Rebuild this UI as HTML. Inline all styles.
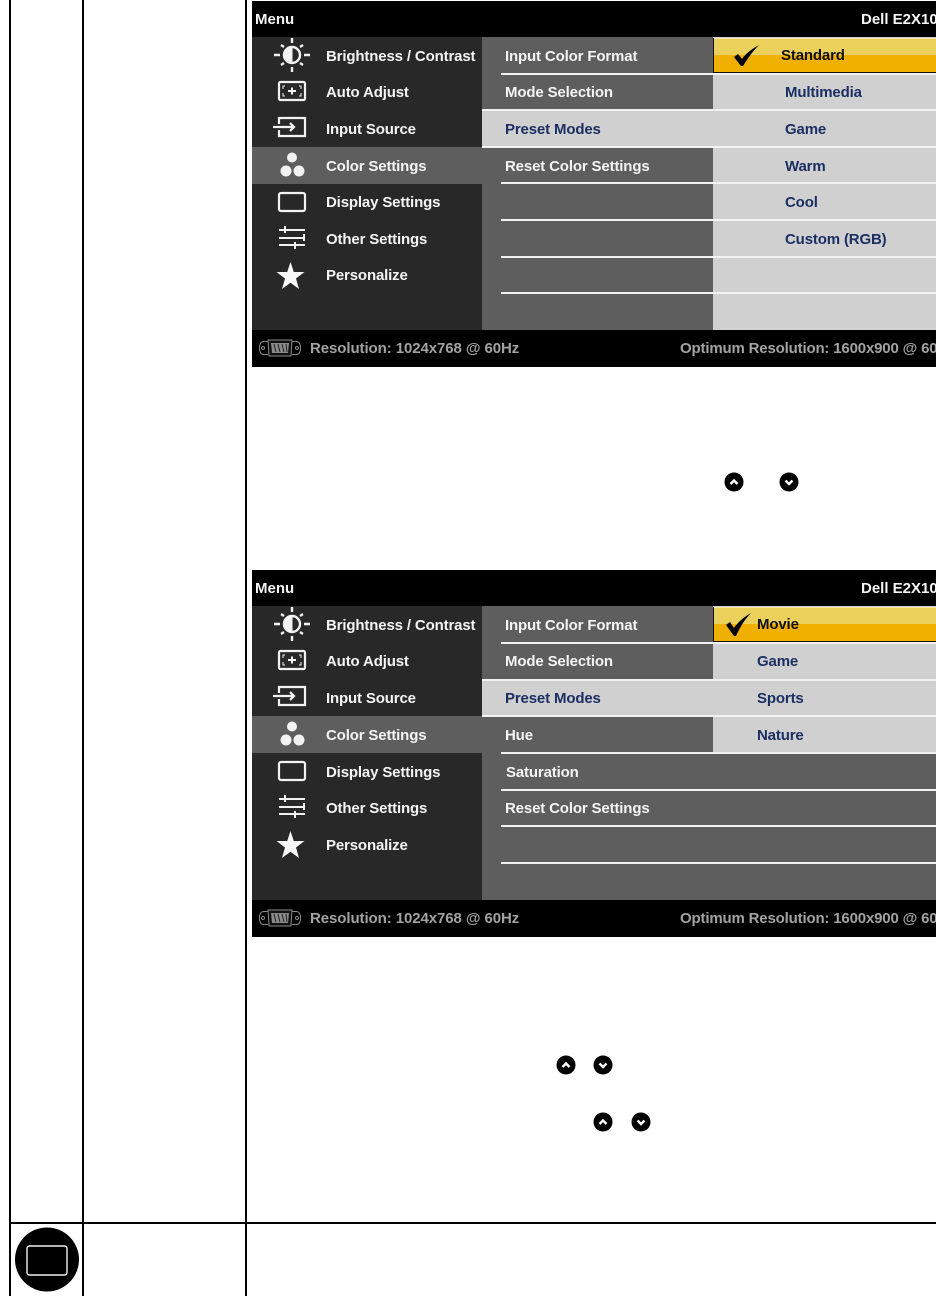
<!DOCTYPE html>
<html><head><meta charset="utf-8"><style>
html,body{margin:0;padding:0;background:#fff}
#p{position:relative;width:936px;height:1296px;overflow:hidden;background:#fff;font-family:"Liberation Sans",Arial,sans-serif}
#p div{position:absolute}
.k{background:#000}
.o{left:252px;width:684px;height:367px;background:#000;overflow:hidden}
.t{font-weight:bold;font-size:15px;line-height:18px;white-space:nowrap;color:#f4f4f4;margin-top:1px;letter-spacing:-0.15px}
.n{color:#1b2f63}
.d{color:#101010}
.g{color:#a2a2a2;font-size:15px;letter-spacing:-0.08px}
.h{letter-spacing:-0.17px}
.l{background:#f2f2f2;height:2px}
svg{position:absolute}
</style></head><body><div id="p">
<div class="k" style="left:9px;top:0;width:2px;height:1296px"></div>
<div class="k" style="left:82px;top:0;width:2px;height:1296px"></div>
<div class="k" style="left:245px;top:0;width:2px;height:1296px"></div>
<div class="k" style="left:9px;top:1222px;width:927px;height:2px"></div>

<!-- OSD 1 -->
<div class="o" style="top:1px;height:366px">
<div style="left:0;top:36px;width:230px;height:293px;background:#282828"></div>
<div style="left:0;top:146px;width:230px;height:37px;background:#5e5e5e"></div>
<div style="left:230px;top:36px;width:231px;height:293px;background:#5e5e5e"></div>
<div style="left:461px;top:36px;width:223px;height:293px;background:#d0d0d0"></div>
<div style="left:230px;top:109px;width:231px;height:37px;background:#d0d0d0"></div>
<div style="left:462px;top:37px;width:222px;height:35px;background:#f0b000"></div>
<div style="left:462px;top:37px;width:222px;height:17px;background:#ebd05c;border-top:1px solid #f6e9a8;box-sizing:border-box"></div>
<div style="left:461px;top:37px;width:1px;height:36px;background:#111"></div>
<div style="left:462px;top:71px;width:222px;height:1px;background:#111"></div>
<div class="l" style="left:249px;top:72px;width:435px"></div>
<div class="l" style="left:230px;top:108px;width:454px"></div>
<div class="l" style="left:230px;top:145px;width:454px"></div>
<div class="l" style="left:249px;top:181px;width:435px"></div>
<div class="l" style="left:249px;top:218px;width:435px"></div>
<div class="l" style="left:249px;top:255px;width:435px"></div>
<div class="l" style="left:249px;top:291px;width:435px"></div>
</div>
<div class="t" style="left:255px;top:10px;letter-spacing:0">Menu</div>
<div class="t" style="left:861px;top:10px;letter-spacing:0">Dell E2X10</div>
<div class="t" style="left:326px;top:47px">Brightness / Contrast</div>
<div class="t" style="left:326px;top:83px">Auto Adjust</div>
<div class="t" style="left:326px;top:120px">Input Source</div>
<div class="t" style="left:326px;top:157px">Color Settings</div>
<div class="t" style="left:326px;top:193px">Display Settings</div>
<div class="t" style="left:326px;top:230px">Other Settings</div>
<div class="t" style="left:326px;top:266px">Personalize</div>
<div class="t" style="left:505px;top:47px">Input Color Format</div>
<div class="t" style="left:505px;top:83px">Mode Selection</div>
<div class="t n" style="left:505px;top:120px">Preset Modes</div>
<div class="t" style="left:505px;top:157px">Reset Color Settings</div>
<div class="t d" style="left:781px;top:46px">Standard</div>
<div class="t n" style="left:785px;top:83px">Multimedia</div>
<div class="t n" style="left:785px;top:120px">Game</div>
<div class="t n" style="left:785px;top:157px">Warm</div>
<div class="t n" style="left:785px;top:193px">Cool</div>
<div class="t n" style="left:785px;top:230px">Custom (RGB)</div>
<div class="t g" style="left:310px;top:339px">Resolution: 1024x768 @ 60Hz</div>
<div class="t g h" style="left:680px;top:339px">Optimum Resolution: 1600x900 @ 60</div>
<svg style="left:733px;top:44px" width="30" height="24" viewBox="0 0 30 24"><path d="M1 13L5 10L9 15C13 9 19 5 26 1C20 7 15 14 10 22L8 22Z" fill="#000"/></svg>

<!-- OSD 2 -->
<div class="o" style="top:570px">
<div style="left:0;top:36px;width:230px;height:294px;background:#282828"></div>
<div style="left:0;top:146px;width:230px;height:37px;background:#5e5e5e"></div>
<div style="left:230px;top:36px;width:454px;height:294px;background:#5e5e5e"></div>
<div style="left:461px;top:36px;width:223px;height:147px;background:#d0d0d0"></div>
<div style="left:230px;top:110px;width:454px;height:36px;background:#d0d0d0"></div>
<div style="left:462px;top:37px;width:222px;height:35px;background:#f0b000"></div>
<div style="left:462px;top:37px;width:222px;height:17px;background:#ebd05c;border-top:1px solid #f6e9a8;box-sizing:border-box"></div>
<div style="left:461px;top:37px;width:1px;height:36px;background:#111"></div>
<div style="left:462px;top:71px;width:222px;height:1px;background:#111"></div>
<div class="l" style="left:249px;top:72px;width:435px"></div>
<div class="l" style="left:230px;top:109px;width:454px"></div>
<div class="l" style="left:230px;top:145px;width:454px"></div>
<div class="l" style="left:249px;top:182px;width:435px"></div>
<div class="l" style="left:249px;top:219px;width:435px"></div>
<div class="l" style="left:249px;top:255px;width:435px"></div>
<div class="l" style="left:249px;top:292px;width:435px"></div>
</div>
<div class="t" style="left:255px;top:579px;letter-spacing:0">Menu</div>
<div class="t" style="left:861px;top:579px;letter-spacing:0">Dell E2X10</div>
<div class="t" style="left:326px;top:616px">Brightness / Contrast</div>
<div class="t" style="left:326px;top:652px">Auto Adjust</div>
<div class="t" style="left:326px;top:689px">Input Source</div>
<div class="t" style="left:326px;top:726px">Color Settings</div>
<div class="t" style="left:326px;top:763px">Display Settings</div>
<div class="t" style="left:326px;top:799px">Other Settings</div>
<div class="t" style="left:326px;top:836px">Personalize</div>
<div class="t" style="left:505px;top:616px">Input Color Format</div>
<div class="t" style="left:505px;top:652px">Mode Selection</div>
<div class="t n" style="left:505px;top:689px">Preset Modes</div>
<div class="t" style="left:505px;top:726px">Hue</div>
<div class="t" style="left:506px;top:763px">Saturation</div>
<div class="t" style="left:505px;top:799px">Reset Color Settings</div>
<div class="t d" style="left:757px;top:615px">Movie</div>
<div class="t n" style="left:757px;top:652px">Game</div>
<div class="t n" style="left:757px;top:689px">Sports</div>
<div class="t n" style="left:757px;top:726px">Nature</div>
<div class="t g" style="left:310px;top:909px">Resolution: 1024x768 @ 60Hz</div>
<div class="t g h" style="left:680px;top:909px">Optimum Resolution: 1600x900 @ 60</div>
<svg style="left:724px;top:613px" width="30" height="24" viewBox="0 0 30 24"><path d="M2 12L6 9L10 15C14 9 20 4 27 0C21 6 16 14 12 23L10 23Z" fill="#000"/></svg>

<!-- Menu icons 1 -->
<svg style="left:252px;top:37px" width="80" height="293" viewBox="0 0 80 293">
<g fill="none" stroke="#f2f2f2">
<circle cx="40" cy="18" r="8" stroke-width="2.400"/><path d="M40 10A8 8 0 0 0 40 26Z" fill="#f2f2f2"/>
<path d="M40 1V6M40 30V35M22 18H28M52 18H58M29 8L32 10M51 8L48 10M29 28L32 26M51 28L48 26" stroke-width="2.400"/>
<rect x="27" y="45" width="26" height="18" rx="1.500" stroke-width="2.200"/>
<path d="M33 49H31V52M47 49H49V52M33 59H31V56M47 59H49V56" stroke-width="1"/>
<path d="M36 54H44M40 50.500V57.500" stroke-width="2"/>
<path d="M27 87V81H53V99H27V93M21 90H42M38 86L42 90L38 94" stroke-width="2.200"/>
<circle cx="40" cy="120.500" r="5" fill="#f2f2f2" stroke="none"/><circle cx="34" cy="134" r="5.500" fill="#f2f2f2" stroke="none"/><circle cx="47" cy="134" r="5.500" fill="#f2f2f2" stroke="none"/>
<rect x="27" y="156" width="26" height="18" rx="2" stroke-width="2.200"/>
<path d="M27 193H53M27 201H53M27 208H53M33 189V196M52 197V204M43 205V212" stroke-width="2"/>
<path d="M38.500 225L41.800 235H52.500L44 241.500L47 252L38.500 245.800L30 252L33 241.500L24.500 235H35.200Z" fill="#f8f8f8" stroke="none"/>
</g>
</svg>
<svg style="left:252px;top:606px" width="80" height="293" viewBox="0 0 80 293">
<g fill="none" stroke="#f2f2f2">
<circle cx="40" cy="18" r="8" stroke-width="2.400"/><path d="M40 10A8 8 0 0 0 40 26Z" fill="#f2f2f2"/>
<path d="M40 1V6M40 30V35M22 18H28M52 18H58M29 8L32 10M51 8L48 10M29 28L32 26M51 28L48 26" stroke-width="2.400"/>
<rect x="27" y="45" width="26" height="18" rx="1.500" stroke-width="2.200"/>
<path d="M33 49H31V52M47 49H49V52M33 59H31V56M47 59H49V56" stroke-width="1"/>
<path d="M36 54H44M40 50.500V57.500" stroke-width="2"/>
<path d="M27 87V81H53V99H27V93M21 90H42M38 86L42 90L38 94" stroke-width="2.200"/>
<circle cx="40" cy="120.500" r="5" fill="#f2f2f2" stroke="none"/><circle cx="34" cy="134" r="5.500" fill="#f2f2f2" stroke="none"/><circle cx="47" cy="134" r="5.500" fill="#f2f2f2" stroke="none"/>
<rect x="27" y="156" width="26" height="18" rx="2" stroke-width="2.200"/>
<path d="M27 193H53M27 201H53M27 208H53M33 189V196M52 197V204M43 205V212" stroke-width="2"/>
<path d="M38.500 225L41.800 235H52.500L44 241.500L47 252L38.500 245.800L30 252L33 241.500L24.500 235H35.200Z" fill="#f8f8f8" stroke="none"/>
</g>
</svg>

<!-- VGA icons -->
<svg style="left:258px;top:338px" width="44" height="20" viewBox="0 0 44 20"><g fill="none" stroke="#8a8a8a"><path d="M10 3.500H6Q1.500 3.500 1.500 10Q1.500 16.500 6 16.500H10M34 3.500H38Q42.500 3.500 42.500 10Q42.500 16.500 38 16.500H34"/><circle cx="5" cy="10" r="1.500"/><circle cx="39" cy="10" r="1.500"/><path d="M10 2H34L33 18H11Z" fill="#111"/><path d="M13 5H31L30 15H14Z" fill="#8a8a8a" stroke="none"/><path d="M16 6L18 14M20 6L22 14M24 6L26 14M28 6L29 14" stroke="#222"/></g></svg>
<svg style="left:258px;top:908px" width="44" height="20" viewBox="0 0 44 20"><g fill="none" stroke="#8a8a8a"><path d="M10 3.500H6Q1.500 3.500 1.500 10Q1.500 16.500 6 16.500H10M34 3.500H38Q42.500 3.500 42.500 10Q42.500 16.500 38 16.500H34"/><circle cx="5" cy="10" r="1.500"/><circle cx="39" cy="10" r="1.500"/><path d="M10 2H34L33 18H11Z" fill="#111"/><path d="M13 5H31L30 15H14Z" fill="#8a8a8a" stroke="none"/><path d="M16 6L18 14M20 6L22 14M24 6L26 14M28 6L29 14" stroke="#222"/></g></svg>

<!-- buttons -->
<svg style="left:724px;top:472px" width="20" height="20"><circle cx="10" cy="10" r="9.500" fill="#000"/><path d="M6.500 12L10 8.500L13.500 12" fill="none" stroke="#fff" stroke-width="2.400"/></svg>
<svg style="left:779px;top:472px" width="20" height="20"><circle cx="10" cy="10" r="9.500" fill="#000"/><path d="M6.500 8.500L10 12L13.500 8.500" fill="none" stroke="#fff" stroke-width="2.400"/></svg>
<svg style="left:556px;top:1055px" width="20" height="20"><circle cx="10" cy="10" r="9.500" fill="#000"/><path d="M6.500 12L10 8.500L13.500 12" fill="none" stroke="#fff" stroke-width="2.400"/></svg>
<svg style="left:593px;top:1055px" width="20" height="20"><circle cx="10" cy="10" r="9.500" fill="#000"/><path d="M6.500 8.500L10 12L13.500 8.500" fill="none" stroke="#fff" stroke-width="2.400"/></svg>
<svg style="left:593px;top:1112px" width="20" height="20"><circle cx="10" cy="10" r="9.500" fill="#000"/><path d="M6.500 12L10 8.500L13.500 12" fill="none" stroke="#fff" stroke-width="2.400"/></svg>
<svg style="left:631px;top:1112px" width="20" height="20"><circle cx="10" cy="10" r="9.500" fill="#000"/><path d="M6.500 8.500L10 12L13.500 8.500" fill="none" stroke="#fff" stroke-width="2.400"/></svg>

<!-- bottom icon -->
<svg style="left:14px;top:1226px" width="66" height="68" viewBox="0 0 66 68"><circle cx="33" cy="33.500" r="32" fill="#000"/><rect x="13" y="20" width="40" height="29" rx="2.500" fill="#000" stroke="#f0f0f0" stroke-width="1.400"/></svg>
</div></body></html>
